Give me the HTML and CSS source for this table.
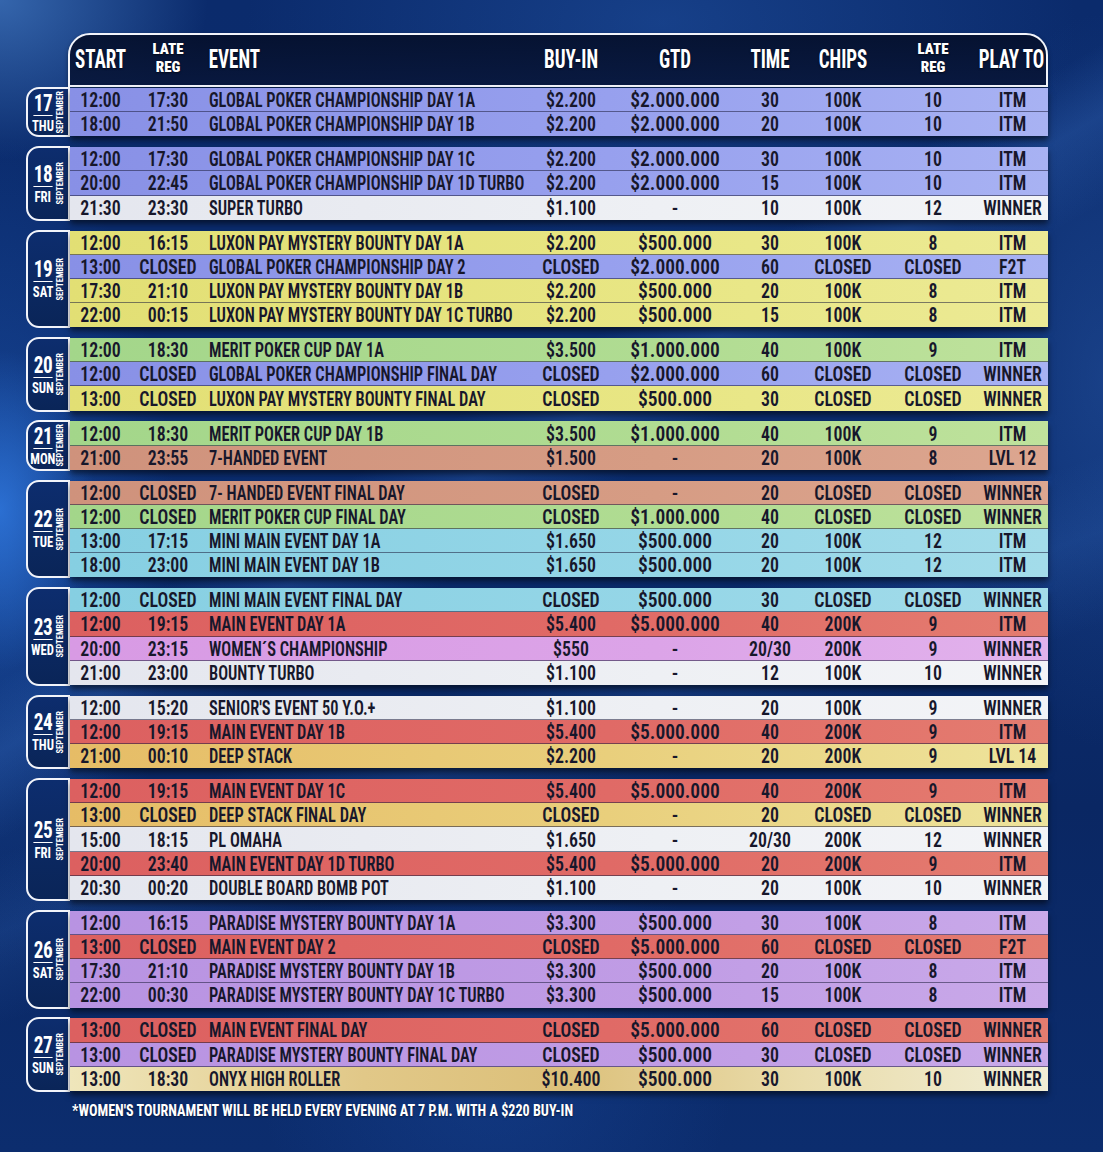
FILE: index.html
```html
<!DOCTYPE html>
<html lang="en">
<head>
<meta charset="utf-8">
<title>September Schedule</title>
<link rel="stylesheet" href="styles.css">
</head>
<body>
<main class="sheet">
  <div class="head">
    <span class="h">START</span>
    <span class="h two"><b>LATE</b><b>REG</b></span>
    <span class="h ev">EVENT</span>
    <span class="h">BUY-IN</span>
    <span class="h">GTD</span>
    <span class="h">TIME</span>
    <span class="h">CHIPS</span>
    <span class="h two"><b>LATE</b><b>REG</b></span>
    <span class="h">PLAY TO</span>
  </div>

  <section class="day">
    <div class="badge"><div class="dnum"><b>17</b><i>THU</i></div><span class="mon">SEPTEMBER</span></div>
    <div class="rows">
      <div class="row blue"><span>12:00</span><span>17:30</span><span class="ev">GLOBAL POKER CHAMPIONSHIP DAY 1A</span><span>$2.200</span><span class="g">$2.000.000</span><span>30</span><span>100K</span><span>10</span><span>ITM</span></div>
      <div class="row blue"><span>18:00</span><span>21:50</span><span class="ev">GLOBAL POKER CHAMPIONSHIP DAY 1B</span><span>$2.200</span><span class="g">$2.000.000</span><span>20</span><span>100K</span><span>10</span><span>ITM</span></div>
    </div>
  </section>

  <section class="day">
    <div class="badge"><div class="dnum"><b>18</b><i>FRI</i></div><span class="mon">SEPTEMBER</span></div>
    <div class="rows">
      <div class="row blue"><span>12:00</span><span>17:30</span><span class="ev">GLOBAL POKER CHAMPIONSHIP DAY 1C</span><span>$2.200</span><span class="g">$2.000.000</span><span>30</span><span>100K</span><span>10</span><span>ITM</span></div>
      <div class="row blue"><span>20:00</span><span>22:45</span><span class="ev">GLOBAL POKER CHAMPIONSHIP DAY 1D TURBO</span><span>$2.200</span><span class="g">$2.000.000</span><span>15</span><span>100K</span><span>10</span><span>ITM</span></div>
      <div class="row white"><span>21:30</span><span>23:30</span><span class="ev">SUPER TURBO</span><span>$1.100</span><span class="g">-</span><span>10</span><span>100K</span><span>12</span><span>WINNER</span></div>
    </div>
  </section>

  <section class="day">
    <div class="badge"><div class="dnum"><b>19</b><i>SAT</i></div><span class="mon">SEPTEMBER</span></div>
    <div class="rows">
      <div class="row yellow"><span>12:00</span><span>16:15</span><span class="ev">LUXON PAY MYSTERY BOUNTY DAY 1A</span><span>$2.200</span><span class="g">$500.000</span><span>30</span><span>100K</span><span>8</span><span>ITM</span></div>
      <div class="row blue"><span>13:00</span><span>CLOSED</span><span class="ev">GLOBAL POKER CHAMPIONSHIP DAY 2</span><span>CLOSED</span><span class="g">$2.000.000</span><span>60</span><span>CLOSED</span><span>CLOSED</span><span>F2T</span></div>
      <div class="row yellow"><span>17:30</span><span>21:10</span><span class="ev">LUXON PAY MYSTERY BOUNTY DAY 1B</span><span>$2.200</span><span class="g">$500.000</span><span>20</span><span>100K</span><span>8</span><span>ITM</span></div>
      <div class="row yellow"><span>22:00</span><span>00:15</span><span class="ev">LUXON PAY MYSTERY BOUNTY DAY 1C TURBO</span><span>$2.200</span><span class="g">$500.000</span><span>15</span><span>100K</span><span>8</span><span>ITM</span></div>
    </div>
  </section>

  <section class="day">
    <div class="badge"><div class="dnum"><b>20</b><i>SUN</i></div><span class="mon">SEPTEMBER</span></div>
    <div class="rows">
      <div class="row green"><span>12:00</span><span>18:30</span><span class="ev">MERIT POKER CUP DAY 1A</span><span>$3.500</span><span class="g">$1.000.000</span><span>40</span><span>100K</span><span>9</span><span>ITM</span></div>
      <div class="row blue"><span>12:00</span><span>CLOSED</span><span class="ev">GLOBAL POKER CHAMPIONSHIP FINAL DAY</span><span>CLOSED</span><span class="g">$2.000.000</span><span>60</span><span>CLOSED</span><span>CLOSED</span><span>WINNER</span></div>
      <div class="row yellow"><span>13:00</span><span>CLOSED</span><span class="ev">LUXON PAY MYSTERY BOUNTY FINAL DAY</span><span>CLOSED</span><span class="g">$500.000</span><span>30</span><span>CLOSED</span><span>CLOSED</span><span>WINNER</span></div>
    </div>
  </section>

  <section class="day">
    <div class="badge"><div class="dnum"><b>21</b><i>MON</i></div><span class="mon">SEPTEMBER</span></div>
    <div class="rows">
      <div class="row green"><span>12:00</span><span>18:30</span><span class="ev">MERIT POKER CUP DAY 1B</span><span>$3.500</span><span class="g">$1.000.000</span><span>40</span><span>100K</span><span>9</span><span>ITM</span></div>
      <div class="row salmon"><span>21:00</span><span>23:55</span><span class="ev">7-HANDED EVENT</span><span>$1.500</span><span class="g">-</span><span>20</span><span>100K</span><span>8</span><span>LVL 12</span></div>
    </div>
  </section>

  <section class="day">
    <div class="badge"><div class="dnum"><b>22</b><i>TUE</i></div><span class="mon">SEPTEMBER</span></div>
    <div class="rows">
      <div class="row salmon"><span>12:00</span><span>CLOSED</span><span class="ev">7- HANDED EVENT FINAL DAY</span><span>CLOSED</span><span class="g">-</span><span>20</span><span>CLOSED</span><span>CLOSED</span><span>WINNER</span></div>
      <div class="row green"><span>12:00</span><span>CLOSED</span><span class="ev">MERIT POKER CUP FINAL DAY</span><span>CLOSED</span><span class="g">$1.000.000</span><span>40</span><span>CLOSED</span><span>CLOSED</span><span>WINNER</span></div>
      <div class="row cyan"><span>13:00</span><span>17:15</span><span class="ev">MINI MAIN EVENT DAY 1A</span><span>$1.650</span><span class="g">$500.000</span><span>20</span><span>100K</span><span>12</span><span>ITM</span></div>
      <div class="row cyan"><span>18:00</span><span>23:00</span><span class="ev">MINI MAIN EVENT DAY 1B</span><span>$1.650</span><span class="g">$500.000</span><span>20</span><span>100K</span><span>12</span><span>ITM</span></div>
    </div>
  </section>

  <section class="day">
    <div class="badge"><div class="dnum"><b>23</b><i>WED</i></div><span class="mon">SEPTEMBER</span></div>
    <div class="rows">
      <div class="row cyan"><span>12:00</span><span>CLOSED</span><span class="ev">MINI MAIN EVENT FINAL DAY</span><span>CLOSED</span><span class="g">$500.000</span><span>30</span><span>CLOSED</span><span>CLOSED</span><span>WINNER</span></div>
      <div class="row red"><span>12:00</span><span>19:15</span><span class="ev">MAIN EVENT DAY 1A</span><span>$5.400</span><span class="g">$5.000.000</span><span>40</span><span>200K</span><span>9</span><span>ITM</span></div>
      <div class="row pink"><span>20:00</span><span>23:15</span><span class="ev">WOMEN´S CHAMPIONSHIP</span><span>$550</span><span class="g">-</span><span>20/30</span><span>200K</span><span>9</span><span>WINNER</span></div>
      <div class="row white"><span>21:00</span><span>23:00</span><span class="ev">BOUNTY TURBO</span><span>$1.100</span><span class="g">-</span><span>12</span><span>100K</span><span>10</span><span>WINNER</span></div>
    </div>
  </section>

  <section class="day">
    <div class="badge"><div class="dnum"><b>24</b><i>THU</i></div><span class="mon">SEPTEMBER</span></div>
    <div class="rows">
      <div class="row white"><span>12:00</span><span>15:20</span><span class="ev">SENIOR'S EVENT 50 Y.O.+</span><span>$1.100</span><span class="g">-</span><span>20</span><span>100K</span><span>9</span><span>WINNER</span></div>
      <div class="row red"><span>12:00</span><span>19:15</span><span class="ev">MAIN EVENT DAY 1B</span><span>$5.400</span><span class="g">$5.000.000</span><span>40</span><span>200K</span><span>9</span><span>ITM</span></div>
      <div class="row gold"><span>21:00</span><span>00:10</span><span class="ev">DEEP STACK</span><span>$2.200</span><span class="g">-</span><span>20</span><span>200K</span><span>9</span><span>LVL 14</span></div>
    </div>
  </section>

  <section class="day">
    <div class="badge"><div class="dnum"><b>25</b><i>FRI</i></div><span class="mon">SEPTEMBER</span></div>
    <div class="rows">
      <div class="row red"><span>12:00</span><span>19:15</span><span class="ev">MAIN EVENT DAY 1C</span><span>$5.400</span><span class="g">$5.000.000</span><span>40</span><span>200K</span><span>9</span><span>ITM</span></div>
      <div class="row gold"><span>13:00</span><span>CLOSED</span><span class="ev">DEEP STACK FINAL DAY</span><span>CLOSED</span><span class="g">-</span><span>20</span><span>CLOSED</span><span>CLOSED</span><span>WINNER</span></div>
      <div class="row white"><span>15:00</span><span>18:15</span><span class="ev">PL OMAHA</span><span>$1.650</span><span class="g">-</span><span>20/30</span><span>200K</span><span>12</span><span>WINNER</span></div>
      <div class="row red"><span>20:00</span><span>23:40</span><span class="ev">MAIN EVENT DAY 1D TURBO</span><span>$5.400</span><span class="g">$5.000.000</span><span>20</span><span>200K</span><span>9</span><span>ITM</span></div>
      <div class="row white"><span>20:30</span><span>00:20</span><span class="ev">DOUBLE BOARD BOMB POT</span><span>$1.100</span><span class="g">-</span><span>20</span><span>100K</span><span>10</span><span>WINNER</span></div>
    </div>
  </section>

  <section class="day">
    <div class="badge"><div class="dnum"><b>26</b><i>SAT</i></div><span class="mon">SEPTEMBER</span></div>
    <div class="rows">
      <div class="row purple"><span>12:00</span><span>16:15</span><span class="ev">PARADISE MYSTERY BOUNTY DAY 1A</span><span>$3.300</span><span class="g">$500.000</span><span>30</span><span>100K</span><span>8</span><span>ITM</span></div>
      <div class="row red"><span>13:00</span><span>CLOSED</span><span class="ev">MAIN EVENT DAY 2</span><span>CLOSED</span><span class="g">$5.000.000</span><span>60</span><span>CLOSED</span><span>CLOSED</span><span>F2T</span></div>
      <div class="row purple"><span>17:30</span><span>21:10</span><span class="ev">PARADISE MYSTERY BOUNTY DAY 1B</span><span>$3.300</span><span class="g">$500.000</span><span>20</span><span>100K</span><span>8</span><span>ITM</span></div>
      <div class="row purple"><span>22:00</span><span>00:30</span><span class="ev">PARADISE MYSTERY BOUNTY DAY 1C TURBO</span><span>$3.300</span><span class="g">$500.000</span><span>15</span><span>100K</span><span>8</span><span>ITM</span></div>
    </div>
  </section>

  <section class="day">
    <div class="badge"><div class="dnum"><b>27</b><i>SUN</i></div><span class="mon">SEPTEMBER</span></div>
    <div class="rows">
      <div class="row red"><span>13:00</span><span>CLOSED</span><span class="ev">MAIN EVENT FINAL DAY</span><span>CLOSED</span><span class="g">$5.000.000</span><span>60</span><span>CLOSED</span><span>CLOSED</span><span>WINNER</span></div>
      <div class="row purple"><span>13:00</span><span>CLOSED</span><span class="ev">PARADISE MYSTERY BOUNTY FINAL DAY</span><span>CLOSED</span><span class="g">$500.000</span><span>30</span><span>CLOSED</span><span>CLOSED</span><span>WINNER</span></div>
      <div class="row onyx"><span>13:00</span><span>18:30</span><span class="ev">ONYX HIGH ROLLER</span><span>$10.400</span><span class="g">$500.000</span><span>30</span><span>100K</span><span>10</span><span>WINNER</span></div>
    </div>
  </section>

  <p class="note">*WOMEN'S TOURNAMENT WILL BE HELD EVERY EVENING AT 7 P.M. WITH A $220 BUY-IN</p>
</main>
</body>
</html>
```
FILE: styles.css
```css
html, body {
  margin: 0;
  padding: 0;
}
body {
  width: 1103px;
  height: 1152px;
  overflow: hidden;
  font-family: "Roboto Condensed", "Roboto", sans-serif;
  font-stretch: 75%;
  background:
    radial-gradient(ellipse 260px 200px at 0% 0%, rgba(80,140,215,.6), transparent 80%),
    linear-gradient(150deg, transparent 38%, rgba(70,130,220,.22) 42%, transparent 47%),
    linear-gradient(160deg, transparent 55%, rgba(60,120,210,.18) 60%, transparent 66%),
    radial-gradient(ellipse 120px 200px at 0% 510px, rgba(50,125,230,.75), transparent 80%),
    radial-gradient(ellipse 220px 520px at 0% 48%, rgba(40,105,205,.45), transparent 80%),
    radial-gradient(ellipse 200px 460px at 1103px 380px, rgba(50,100,180,.35), transparent 80%),
    radial-gradient(ellipse 520px 280px at 60% 2%, rgba(40,95,180,.4), transparent 80%),
    radial-gradient(ellipse 300px 300px at 45% 92%, rgba(30,80,170,.35), transparent 80%),
    linear-gradient(180deg, #0b2b6c 0%, #0b2d70 40%, #0a2763 70%, #0c2d6e 100%);
}
.sheet {
  padding-top: 33px;
}

/* ---------- header ---------- */
.head {
  box-sizing: border-box;
  margin-left: 68px;
  width: 980px;
  height: 54px;
  border: 2px solid #f2f4fa;
  border-radius: 22px 22px 0 0;
  background: linear-gradient(180deg, rgba(5,16,44,.93), rgba(8,22,58,.9));
  display: grid;
  grid-template-columns: 61px 74px 330px 72px 136px 54px 92px 88px minmax(0, 1fr);
  align-items: center;
  color: #fff;
  box-shadow: 0 2px 4px rgba(0,0,0,.4);
}
.h {
  display: flex;
  justify-content: center;
  white-space: nowrap;
  font-size: 25px;
  font-weight: 700;
  line-height: 30px;
  transform: scaleX(.76);
  text-shadow: 0 1px 2px rgba(0,0,0,.6);
}
.h.two {
  flex-direction: column;
  align-items: center;
  transform: scaleX(1);
  margin-top: -2px;
}
.h.two b {
  font-size: 15px;
  line-height: 17.6px;
}
.h.ev {
  justify-content: flex-start;
  padding-left: 5px;
  transform-origin: left center;
}

/* ---------- day groups ---------- */
.day {
  display: flex;
  margin: 1px 0 0 26px;
  width: 1022px;
}
.day + .day {
  margin-top: 10.8px;
}
.badge {
  box-sizing: border-box;
  width: 44px;
  flex: none;
  border: 2px solid #f2f4fa;
  border-radius: 13px 0 0 13px;
  background: linear-gradient(180deg, #0d2d6e, #0a2558);
  display: flex;
  align-items: center;
  justify-content: center;
  color: #fff;
  margin: -1px 0;
}
.dnum {
  display: flex;
  flex-direction: column;
  align-items: center;
  width: 24px;
}
.dnum b {
  font-size: 24px;
  line-height: 22px;
  font-weight: 700;
  padding-bottom: 1px;
  width: 24px;
  text-align: center;
  border-bottom: 1.5px solid #fff;
  letter-spacing: -.5px;
  transform: scaleX(.8);
}
.dnum i {
  font-style: normal;
  font-size: 15px;
  line-height: 14px;
  font-weight: 700;
  margin-top: 3px;
  transform: scaleX(.85);
}
.mon {
  writing-mode: vertical-rl;
  transform: rotate(180deg);
  font-size: 8.5px;
  line-height: 9px;
  font-weight: 700;
  margin-left: 1px;
  color: #fff;
}
.rows {
  flex: 1;
  box-shadow: 0 4px 6px rgba(0,0,0,.55);
}
.row {
  height: 24.2px;
  display: grid;
  grid-template-columns: 61px 74px 330px 72px 136px 54px 92px 88px minmax(0, 1fr);
  align-items: center;
  color: #17172b;
  box-shadow: inset 0 -1px 0 rgba(30,30,60,.55);
}
.row:last-child {
  box-shadow: none;
}
.row > span {
  display: flex;
  justify-content: center;
  white-space: nowrap;
  font-size: 20.5px;
  line-height: 24px;
  font-weight: 600;
  transform: scaleX(.87);
}
.row > .ev {
  justify-content: flex-start;
  padding-left: 5px;
  transform-origin: left center;
  transform: scaleX(.8);
}
.row > .g {
  transform: scaleX(.95);
}

/* ---------- row colours ---------- */
.blue   { background: linear-gradient(90deg, #8890e6 0%, #97a0ee 55%, #a8b2f3 100%); }
.white  { background: linear-gradient(90deg, #e4e6ee 0%, #eef0f4 60%, #f3f4f7 100%); }
.yellow { background: linear-gradient(90deg, #e2df74 0%, #e8e684 60%, #ecea95 100%); }
.green  { background: linear-gradient(90deg, #a3d68a 0%, #b0dc92 60%, #bfe29c 100%); }
.salmon { background: linear-gradient(90deg, #cf927c 0%, #d69c84 60%, #dca690 100%); }
.cyan   { background: linear-gradient(90deg, #86cfe2 0%, #95d6e7 60%, #a3dcea 100%); }
.red    { background: linear-gradient(90deg, #dc6060 0%, #e06a66 55%, #e47c70 100%); }
.pink   { background: linear-gradient(90deg, #d89ae4 0%, #dca4e8 60%, #e2b2ec 100%); }
.gold   { background: linear-gradient(90deg, #e6bc66 0%, #e9cf7c 55%, #eee49c 100%); }
.purple { background: linear-gradient(90deg, #b893e2 0%, #c09ce5 60%, #c9a9e9 100%); }
.onyx   { background: linear-gradient(90deg, #efe6bb 0%, #e1c888 30%, #dcc07a 50%, #e9dcab 75%, #f1eed6 100%); }

/* ---------- footnote ---------- */
.note {
  margin: 9px 0 0 72px;
  color: #fff;
  font-size: 17px;
  line-height: 20px;
  font-weight: 700;
  white-space: nowrap;
  transform: scaleX(.83);
  transform-origin: left center;
  text-shadow: 0 1px 2px rgba(0,0,0,.5);
}
```
